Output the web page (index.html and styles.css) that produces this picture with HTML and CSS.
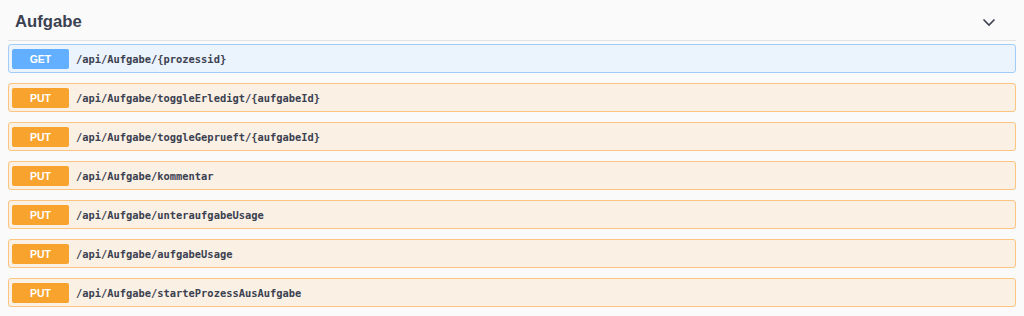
FILE: index.html
```html
<!DOCTYPE html>
<html lang="en">
<head>
  <meta charset="UTF-8">
  <meta name="viewport" content="width=device-width, initial-scale=1.0">
  <title>Aufgabe</title>
  <link rel="stylesheet" href="styles.css">
</head>
<body>

  <!-- Tag Section -->
  <div class="tag-section">
    <div class="tag-header">
      <h3>Aufgabe</h3>
      <svg class="chevron" width="14" height="9" viewBox="0 0 14 9">
        <path d="M1.5 1.5 L7 7 L12.5 1.5" fill="none" stroke="#3b4151" stroke-width="1.6"/>
      </svg>
    </div>

    <div class="opblock get">
      <span class="method">GET</span>
      <span class="path">/api/Aufgabe/{prozessid}</span>
    </div>

    <div class="opblock put">
      <span class="method">PUT</span>
      <span class="path">/api/Aufgabe/toggleErledigt/{aufgabeId}</span>
    </div>

    <div class="opblock put">
      <span class="method">PUT</span>
      <span class="path">/api/Aufgabe/toggleGeprueft/{aufgabeId}</span>
    </div>

    <div class="opblock put">
      <span class="method">PUT</span>
      <span class="path">/api/Aufgabe/kommentar</span>
    </div>

    <div class="opblock put">
      <span class="method">PUT</span>
      <span class="path">/api/Aufgabe/unteraufgabeUsage</span>
    </div>

    <div class="opblock put">
      <span class="method">PUT</span>
      <span class="path">/api/Aufgabe/aufgabeUsage</span>
    </div>

    <div class="opblock put">
      <span class="method">PUT</span>
      <span class="path">/api/Aufgabe/starteProzessAusAufgabe</span>
    </div>
  </div>

</body>
</html>
```

FILE: styles.css
```css
/* General Styles */
body {
  font-family: 'Liberation Sans', Arial, sans-serif;
  background-color: #fafafa;
  margin: 0;
  padding: 0 8px;
  color: #3b4151;
}

.tag-header {
  display: flex;
  align-items: center;
  justify-content: space-between;
  height: 41px;
  box-sizing: border-box;
  padding: 4px 20px 0 7px;
  border-bottom: 1px solid #e2e3e5;
  margin-bottom: 3px;
}

.tag-header h3 {
  margin: 0;
  font-size: 16.7px;
  font-weight: bold;
  color: #3b4151;
}

.chevron {
  margin-top: 1px;
}

.opblock {
  display: flex;
  align-items: center;
  height: 29px;
  box-sizing: border-box;
  padding: 0 3px;
  margin-bottom: 10px;
  border: 1px solid;
  border-radius: 3px;
}

.opblock.get {
  background-color: #ebf3fc;
  border-color: #a3cdf8;
}

.opblock.put {
  background-color: #faf0e3;
  border-color: #fbc47f;
}

.method {
  width: 57px;
  height: 20px;
  line-height: 20px;
  text-align: center;
  color: #fff;
  font-size: 10.5px;
  font-weight: bold;
  border-radius: 2px;
}

.get .method {
  background-color: #61affe;
}

.put .method {
  background-color: #f7a32d;
}

.path {
  margin-left: 7px;
  font-family: 'DejaVu Sans Mono', monospace;
  font-size: 10.4px;
  font-weight: bold;
  color: #3b4151;
}
```
